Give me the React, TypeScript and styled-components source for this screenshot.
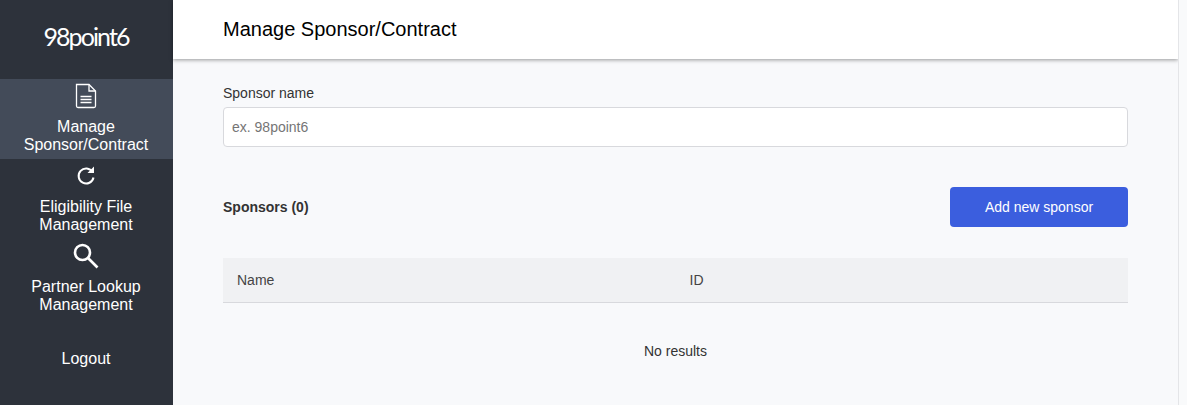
import { createGlobalStyle } from 'styled-components';
import styled from 'styled-components';

const GlobalStyle = createGlobalStyle`
  html, body {
    margin: 0;
    padding: 0;
    height: 100%;
    overflow: hidden;
    background: #f8f9fb;
    font-family: "Liberation Sans", Arial, sans-serif;
  }
`;

const Page = styled.div`
  display: flex;
  width: 1187px;
  height: 405px;
  overflow: hidden;
`;

const Sidebar = styled.nav`
  flex: 0 0 173px;
  box-sizing: border-box;
  padding-right: 1px;
  display: flex;
  flex-direction: column;
  background: #2d323b;
  color: #fff;
`;

const Logo = styled.div`
  height: 79px;
  display: flex;
  align-items: center;
  justify-content: center;
  padding-bottom: 8px;
  box-sizing: border-box;
  font-family: "Lato", sans-serif;
  font-size: 25px;
  font-weight: 400;
  letter-spacing: -1.9px;
  color: #fff;
`;

const NavItem = styled.a<{ $active?: boolean }>`
  height: 80px;
  margin-right: -1px;
  padding-right: 1px;
  display: flex;
  flex-direction: column;
  align-items: center;
  box-sizing: border-box;
  padding-top: 4px;
  background: ${(p) => (p.$active ? '#434b59' : 'transparent')};
  font-size: 16px;
  line-height: 18px;
  text-align: center;
  color: #fff;
`;

const NavIcon = styled.svg`
  width: 26px;
  height: 26px;
  margin-bottom: 9px;
  fill: none;
  stroke: #fff;
`;

const LogoutItem = styled.a`
  height: 80px;
  display: flex;
  align-items: center;
  justify-content: center;
  font-size: 16px;
  line-height: 18px;
  color: #fff;
`;

const Main = styled.main`
  flex: 1;
  min-width: 0;
  display: flex;
  flex-direction: column;
`;

const Header = styled.header`
  height: 59px;
  flex: none;
  display: flex;
  align-items: center;
  padding-left: 50px;
  background: #fff;
  box-shadow: 0 1px 4px rgba(0, 0, 0, 0.4);
`;

const Title = styled.h1`
  margin: 0;
  font-size: 20px;
  font-weight: 400;
  color: #000;
`;

const Content = styled.div`
  padding: 26px 50px 0;
  display: flex;
  flex-direction: column;
`;

const Label = styled.label`
  font-size: 14px;
  line-height: 16px;
  color: #333;
  margin-bottom: 6px;
`;

const Input = styled.input`
  height: 40px;
  box-sizing: border-box;
  padding: 0 8px;
  border: 1px solid #d8d9dd;
  border-radius: 4px;
  background: #fff;
  font-family: inherit;
  font-size: 14px;
  &::placeholder {
    color: #757575;
    opacity: 1;
  }
`;

const ListBar = styled.div`
  margin-top: 40px;
  display: flex;
  align-items: center;
  justify-content: space-between;
`;

const ListTitle = styled.div`
  font-size: 14px;
  font-weight: 700;
  color: #333;
`;

const AddButton = styled.button`
  width: 178px;
  height: 40px;
  border: 0;
  border-radius: 4px;
  background: #3b5ede;
  color: #fff;
  font-family: inherit;
  font-size: 14px;
`;

const Table = styled.div`
  margin-top: 31px;
`;

const TableHead = styled.div`
  height: 45px;
  box-sizing: border-box;
  display: grid;
  grid-template-columns: 1fr 1fr;
  align-items: center;
  background: #f0f1f3;
  border-bottom: 1px solid #d8d9dd;
`;

const HeadCell = styled.div`
  padding-left: 14px;
  font-size: 14px;
  color: #444;
`;

const EmptyRow = styled.div`
  height: 95px;
  display: flex;
  align-items: center;
  justify-content: center;
  font-size: 14px;
  color: #333;
`;

const ScrollTrack = styled.div`
  flex: 0 0 9px;
  box-sizing: border-box;
  border-left: 1px solid #e4e5e8;
  background: #f9fafb;
`;

export default function App() {
  return (
    <>
      <GlobalStyle />
      <Page>
        <Sidebar>
          <Logo>98point6</Logo>
          <NavItem $active>
            <NavIcon viewBox="0 0 26 26" strokeWidth="1.3">
              <path d="M3.5 1.5h12.5l6.5 6.5v15a1.5 1.5 0 0 1-1.5 1.5H5a1.5 1.5 0 0 1-1.5-1.5z" />
              <path d="M16 1.5V8h6.5" />
              <path d="M7.5 13.5h11M7.5 16.5h11M7.5 19.5h11" />
            </NavIcon>
            Manage
            <br />
            Sponsor/Contract
          </NavItem>
          <NavItem>
            <NavIcon viewBox="0 0 26 26" strokeWidth="2">
              <path d="M19.5 9a7.5 7.5 0 1 0 1 5.5" />
              <path d="M21 3.5V10h-6.5z" fill="#fff" strokeWidth="0" />
            </NavIcon>
            Eligibility File
            <br />
            Management
          </NavItem>
          <NavItem>
            <NavIcon viewBox="0 0 26 26" strokeWidth="2.6">
              <circle cx="9.5" cy="9.5" r="7.5" />
              <path d="M15 15l9.5 9.5" />
            </NavIcon>
            Partner Lookup
            <br />
            Management
          </NavItem>
          <LogoutItem>Logout</LogoutItem>
        </Sidebar>
        <Main>
          <Header>
            <Title>Manage Sponsor/Contract</Title>
          </Header>
          <Content>
            <Label>Sponsor name</Label>
            <Input placeholder="ex. 98point6" />
            <ListBar>
              <ListTitle>Sponsors (0)</ListTitle>
              <AddButton>Add new sponsor</AddButton>
            </ListBar>
            <Table>
              <TableHead>
                <HeadCell>Name</HeadCell>
                <HeadCell>ID</HeadCell>
              </TableHead>
              <EmptyRow>No results</EmptyRow>
            </Table>
          </Content>
        </Main>
        <ScrollTrack />
      </Page>
    </>
  );
}
